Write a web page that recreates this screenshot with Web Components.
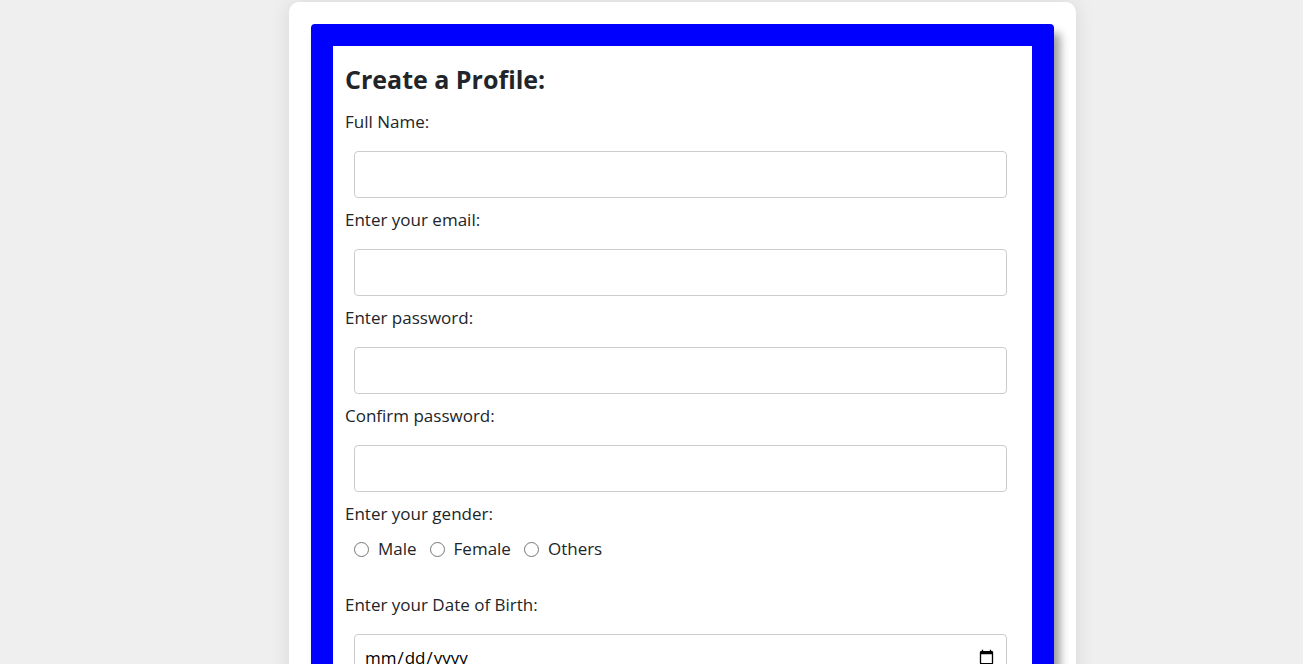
<!DOCTYPE html>
<html lang="en">
<head>
<meta charset="utf-8">
<meta name="viewport" content="width=device-width, initial-scale=1">
<title>Create a Profile</title>
<style>
  body {
    margin: 0;
    padding: 2px 0 24px 62px;
    background: #efefef;
    color: #212529;
    font-family: "Segoe UI", "Open Sans", "Noto Sans", sans-serif;
    font-size: 17px;
    line-height: 26px;
  }
</style>
</head>
<body>
<profile-card>
  <profile-form></profile-form>
</profile-card>

<script>
class ProfileCard extends HTMLElement {
  constructor() {
    super();
    this.attachShadow({ mode: "open" }).innerHTML = `
      <style>
        :host {
          display: block;
          box-sizing: border-box;
          max-width: 787px;
          margin: 0 auto;
          padding: 22px;
          background: #fff;
          border-radius: 10px;
          box-shadow: 0 0 20px rgba(0, 0, 0, .1);
        }
        .frame {
          border: 22px solid #00f;
          border-radius: 4px;
          padding: 16px 12px;
          box-shadow: 6px 9px 10px rgba(0, 0, 0, .4);
        }
      </style>
      <div class="frame"><slot></slot></div>`;
  }
}

class FormField extends HTMLElement {
  constructor() {
    super();
    this.attachShadow({ mode: "open" }).innerHTML = `
      <style>
        :host { display: block; }
        label { display: block; }
        .control { padding: 16px 13px 9px 9px; }
        input {
          display: block;
          box-sizing: border-box;
          width: 100%;
          height: 47px;
          padding: 8px 9px;
          border: 1px solid #ccc;
          border-radius: 4px;
          background: #fff;
          color: #000;
          font: inherit;
        }
      </style>
      <label for="control"><slot></slot></label>
      <div class="control"><input id="control"></div>`;
  }
  connectedCallback() {
    this.shadowRoot.querySelector("input").type = this.getAttribute("type") || "text";
  }
}

class RadioGroup extends HTMLElement {
  connectedCallback() {
    const name = this.getAttribute("name");
    const options = this.getAttribute("options").split(",");
    const root = this.attachShadow({ mode: "open" });
    root.innerHTML = `
      <style>
        :host { display: block; padding-bottom: 30px; }
        fieldset { margin: 0; padding: 0; border: 0; min-width: 0; }
        legend { padding: 0; }
        .options { display: flex; gap: 13px; padding: 9px 9px 0; }
        label { display: flex; align-items: center; gap: 9px; }
        input { width: 15px; height: 15px; margin: 0; }
      </style>
      <fieldset>
        <legend><slot></slot></legend>
        <div class="options">
          ${options.map(o => `<label><input type="radio" name="${name}" value="${o}"><span>${o}</span></label>`).join("")}
        </div>
      </fieldset>`;
  }
}

class ProfileForm extends HTMLElement {
  constructor() {
    super();
    this.attachShadow({ mode: "open" }).innerHTML = `
      <style>
        :host { display: block; }
        h2 { margin: 0 0 13px; font-size: 25px; line-height: 34px; font-weight: 700; }
      </style>
      <form>
        <h2>Create a Profile:</h2>
        <form-field>Full Name:</form-field>
        <form-field type="email">Enter your email:</form-field>
        <form-field type="password">Enter password:</form-field>
        <form-field type="password">Confirm password:</form-field>
        <radio-group name="gender" options="Male,Female,Others">Enter your gender:</radio-group>
        <form-field type="date">Enter your Date of Birth:</form-field>
      </form>`;
  }
}

customElements.define("form-field", FormField);
customElements.define("radio-group", RadioGroup);
customElements.define("profile-form", ProfileForm);
customElements.define("profile-card", ProfileCard);
</script>
</body>
</html>
